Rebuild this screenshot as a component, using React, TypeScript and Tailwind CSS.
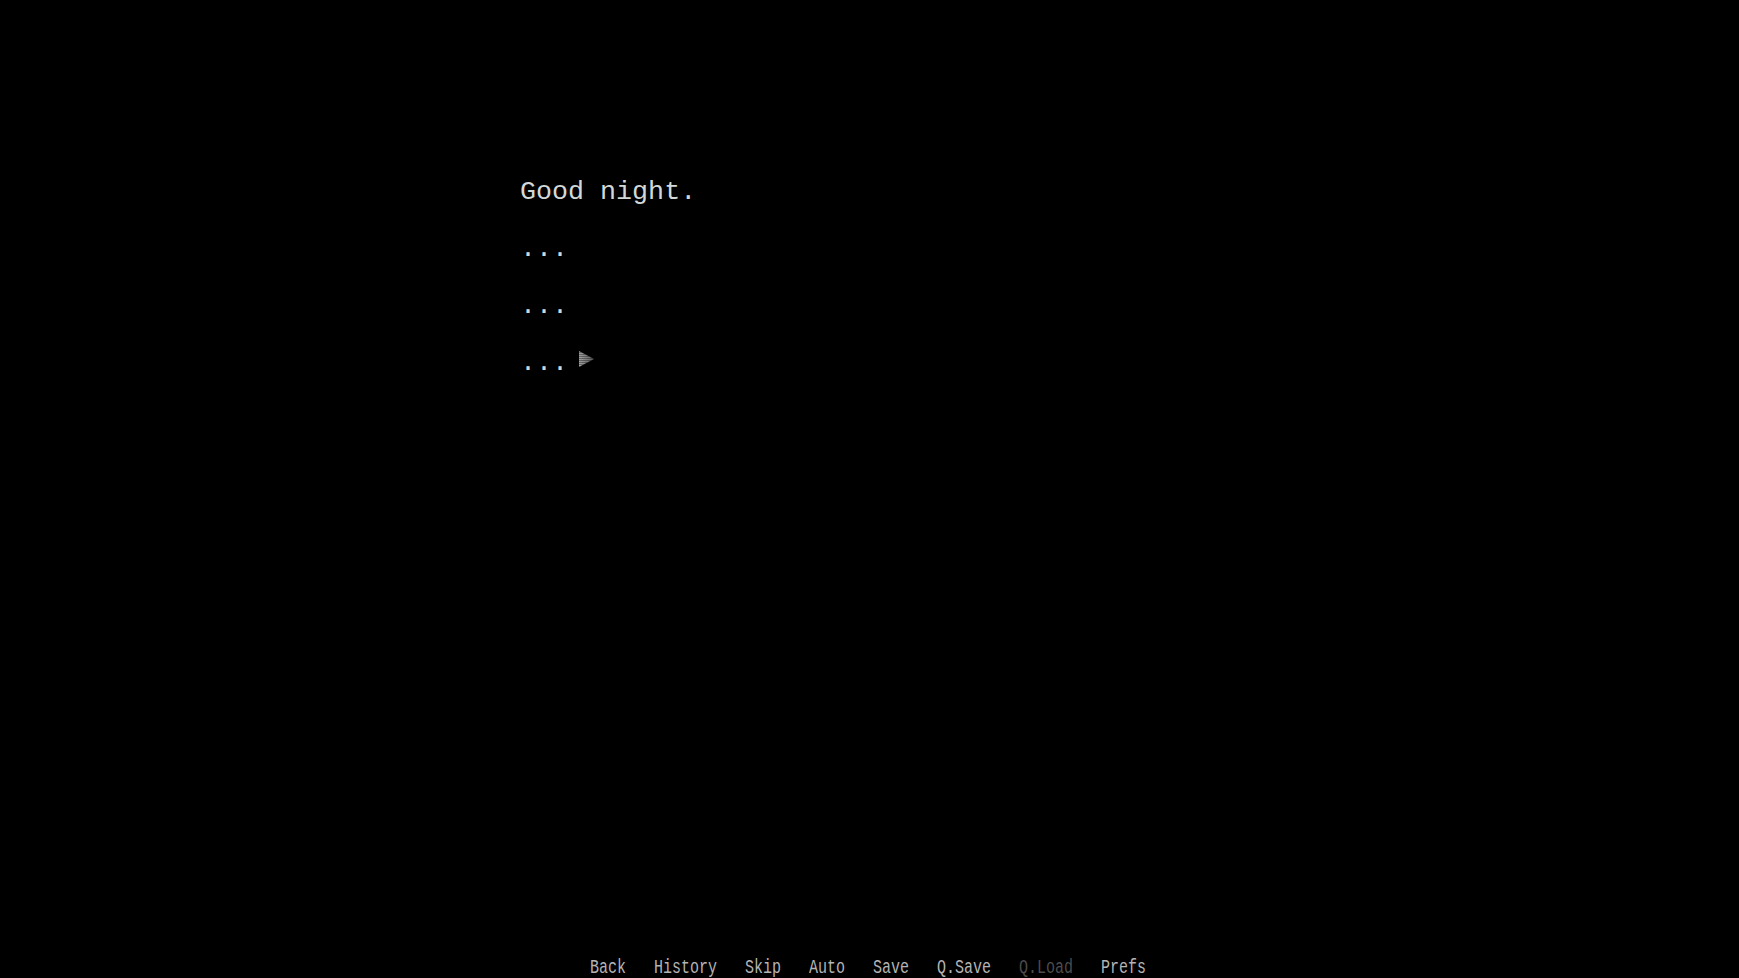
import React from 'react';

const menu = [
    { label: 'Back', dim: false },
    { label: 'History', dim: false },
    { label: 'Skip', dim: false },
    { label: 'Auto', dim: false },
    { label: 'Save', dim: false },
    { label: 'Q.Save', dim: false },
    { label: 'Q.Load', dim: true },
    { label: 'Prefs', dim: false },
];

const ContinueArrow = () => (
    <svg width="17" height="18" viewBox="0 0 17 18" className="ml-[10px]">
        <defs>
            <linearGradient id="arrowFill" x1="0" y1="0" x2="1" y2="0">
                <stop offset="0" stopColor="#a0a0a0" />
                <stop offset="1" stopColor="#5a5a5a" />
            </linearGradient>
            <pattern id="scan" width="17" height="2" patternUnits="userSpaceOnUse">
                <rect width="17" height="1" fill="#000" opacity="0.35" />
            </pattern>
        </defs>
        <polygon points="1,1 16,9 1,17" fill="url(#arrowFill)" />
        <polygon points="1,1 16,9 1,17" fill="url(#scan)" />
    </svg>
);

export default function App() {
    return (
        <div
            className="w-full h-[978px] bg-black flex flex-col"
            style={{ fontFamily: '"Liberation Mono", "DejaVu Sans Mono", monospace' }}
        >
            {/* Dialogue */}
            <div className="flex-1 pt-[164px] pl-[520px] text-[26.7px] leading-[57px] text-[#d2d8d8]">
                <div>Good night.</div>
                <div>...</div>
                <div>...</div>
                <div className="flex items-end">
                    <span>...</span>
                    <span className="h-[57px] flex items-center pb-[10px]">
                        <ContinueArrow />
                    </span>
                </div>
            </div>

            {/* Quick menu */}
            <div className="h-[21px] flex items-start pl-[590px] gap-[28px] text-[15px] leading-[18px]">
                {menu.map((item) => (
                    <span
                        key={item.label}
                        className={`inline-block scale-y-[1.3] origin-top ${item.dim ? 'text-[#4c4c4c]' : 'text-[#b4b4b4]'}`}
                    >
                        {item.label}
                    </span>
                ))}
            </div>
        </div>
    );
}
